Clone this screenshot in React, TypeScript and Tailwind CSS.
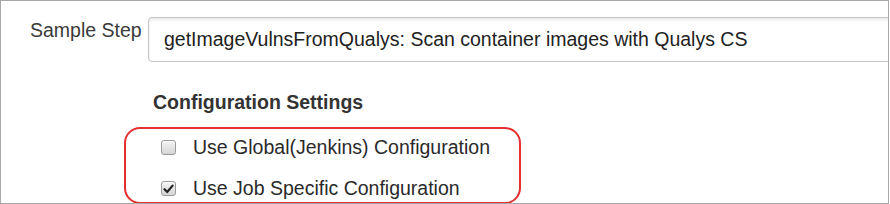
import React from "react";

function Box({ checked }: { checked?: boolean }) {
  return (
    <span className="flex h-[15px] w-[15px] flex-none items-center justify-center rounded-[3px] border border-[#9a9a9a] bg-gradient-to-b from-[#f4f4f4] to-[#d6d6d6] shadow-[inset_0_1px_0_#fff]">
      {checked && (
        <svg width="11" height="10" viewBox="0 0 11 10">
          <path d="M1.5 5.2 L4.2 8 L9.6 1.6" fill="none" stroke="#222" strokeWidth="2.2" strokeLinecap="round" strokeLinejoin="round" />
        </svg>
      )}
    </span>
  );
}

export default function App() {
  const options = [
    { label: "Use Global(Jenkins) Configuration", checked: false },
    { label: "Use Job Specific Configuration", checked: true },
  ];

  return (
    <div
      className="flex h-[204px] w-[889px] flex-col overflow-hidden border border-[#a8a8a8] bg-white text-[#333]"
      style={{ fontFamily: '"Liberation Sans", Arial, sans-serif' }}
    >
      {/* step row */}
      <div className="flex items-start pl-[29px] pt-[16px]">
        <div className="w-[118px] flex-none pt-[2px] text-[19.5px] leading-[22px] text-[#3a3a3a]">Sample Step</div>
        <div className="flex h-[45px] w-[780px] flex-none items-center rounded-[4px] border border-[#c4c4c4] pl-[15px] text-[19.5px] text-[#222] shadow-[inset_0_2px_3px_rgba(0,0,0,0.09)]">
          getImageVulnsFromQualys: Scan container images with Qualys CS
        </div>
      </div>

      {/* configuration */}
      <div className="ml-[152px] mt-[29px] text-[19.5px] font-bold leading-[22px] text-[#333]">Configuration Settings</div>
      <div className="ml-[152px] mt-[8px] h-[2px] bg-[#dedede]" />

      <div className="ml-[123px] mt-[6px] flex w-[397px] flex-col gap-[20px] rounded-[16px] border-2 border-[#e3302f] pb-[3px] pl-[35px] pt-[8px]">
        {options.map((o) => (
          <label key={o.label} className="flex items-center gap-[17px] text-[19.5px] leading-[21px] text-[#2a2a2a]">
            <Box checked={o.checked} />
            <span>{o.label}</span>
          </label>
        ))}
      </div>
    </div>
  );
}
